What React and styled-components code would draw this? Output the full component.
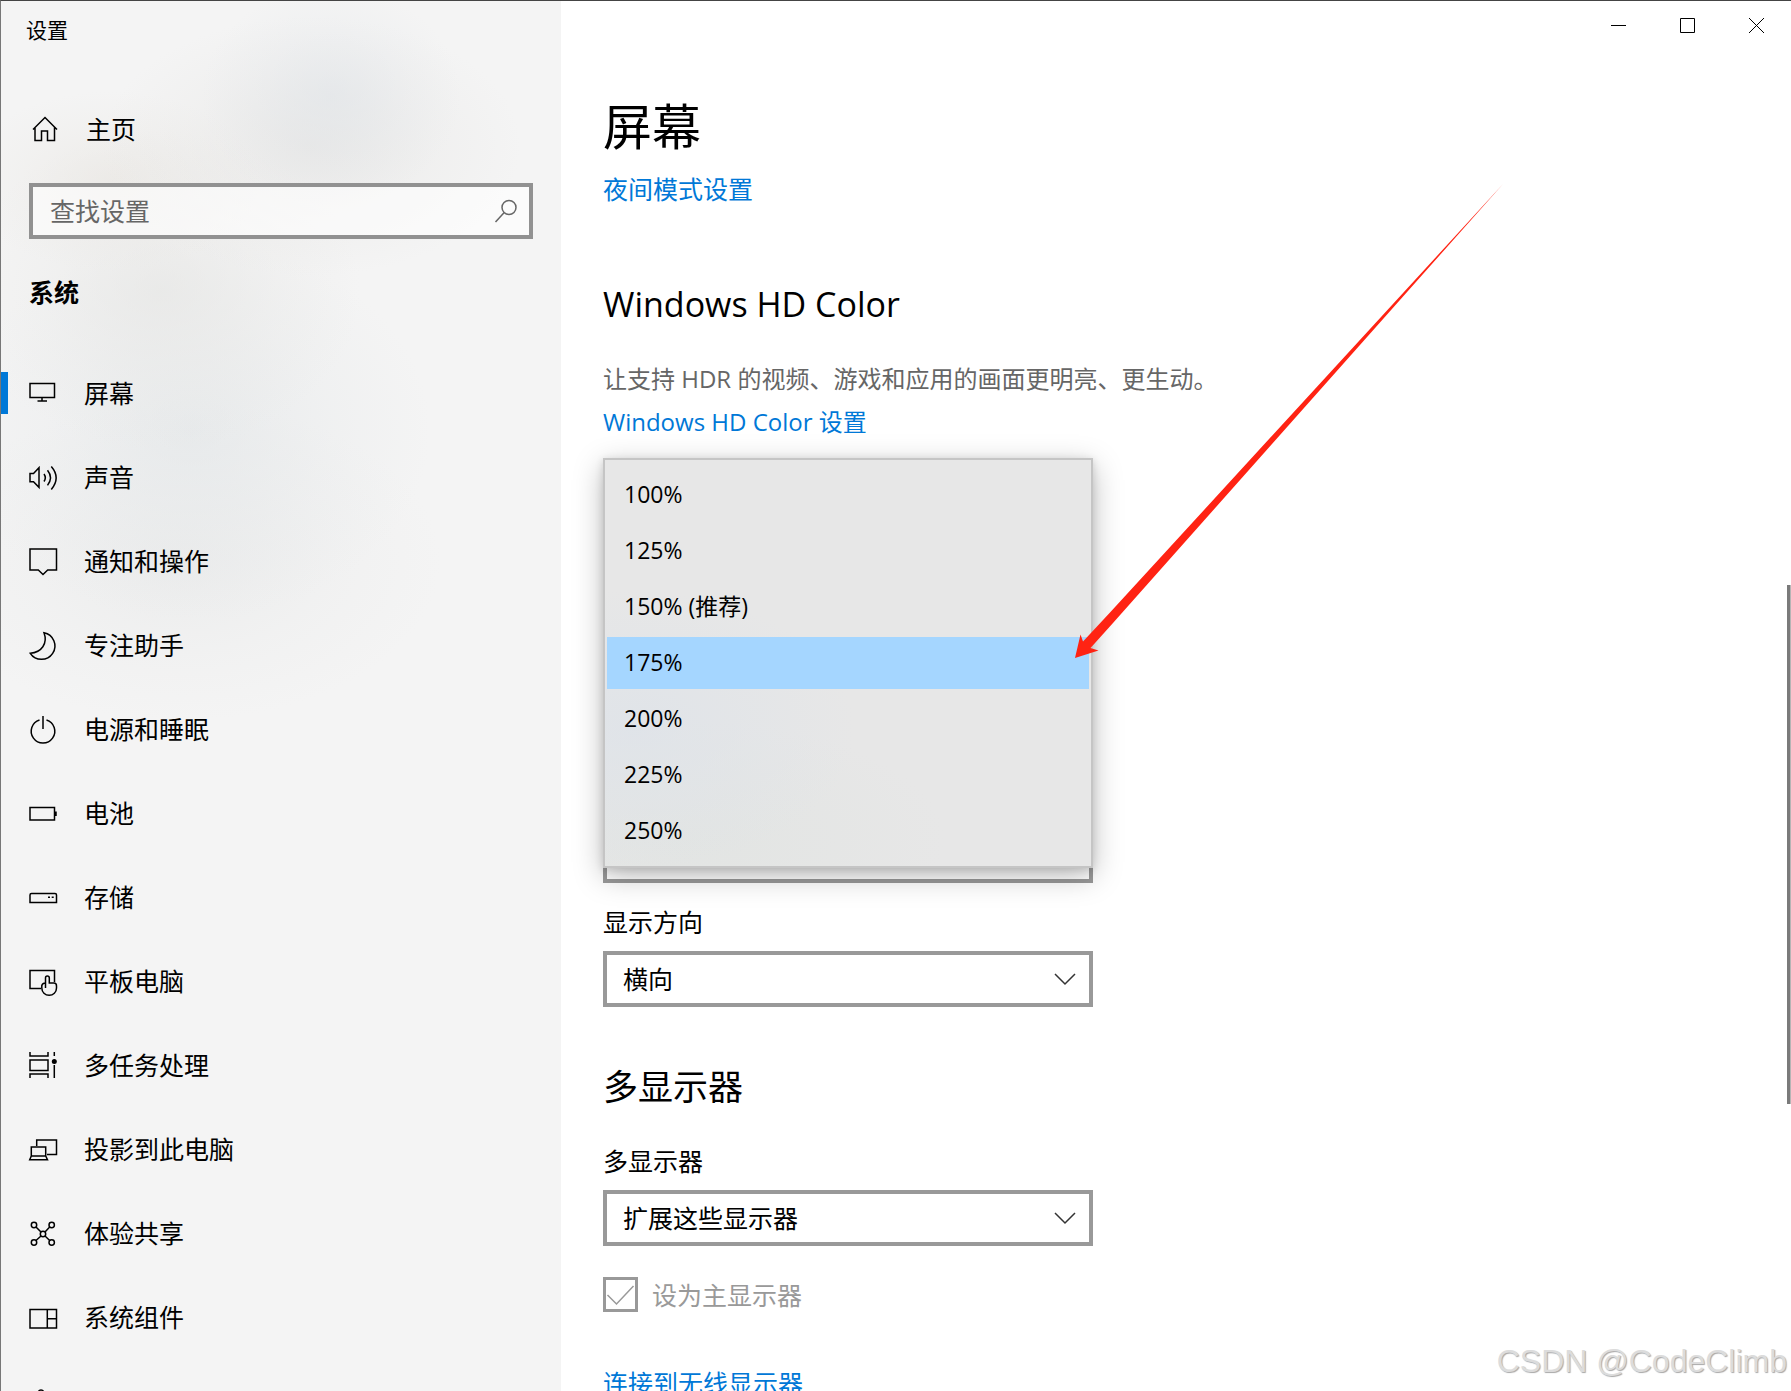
import React, { useState } from 'react';
import styled, { createGlobalStyle } from 'styled-components';

const GlobalStyle = createGlobalStyle`
  * {
    box-sizing: border-box;
  }

  body {
    margin: 0;
    overflow: hidden;
    background-color: #ffffff;
  }

  body, input, select, button {
    font-family: "Open Sans", "Noto Sans CJK SC", sans-serif;
    font-size: 25px;
    line-height: 32px;
    color: #000000;
  }
`;

const Window = styled.div`
  position: relative;
  display: flex;
  height: 100vh;
  overflow: hidden;
  border-top: 1px solid #444444;
  border-left: 1px solid #777777;
`;

const Sidebar = styled.aside`
  flex: 0 0 560px;
  display: flex;
  flex-direction: column;
  background-color: #f4f4f4;
  background-image:
    radial-gradient(ellipse 130px 110px at 330px 95px, rgba(224, 228, 232, 0.6), rgba(224, 228, 232, 0.2) 60%, transparent),
    radial-gradient(ellipse 210px 130px at 310px 145px, rgba(226, 225, 223, 0.6), rgba(226, 225, 223, 0.2) 60%, transparent),
    radial-gradient(ellipse 150px 90px at 110px 180px, rgba(232, 229, 224, 0.6), rgba(232, 229, 224, 0.2) 60%, transparent),
    radial-gradient(ellipse 200px 160px at 160px 290px, rgba(228, 228, 226, 0.6), rgba(228, 228, 226, 0.2) 60%, transparent),
    radial-gradient(ellipse 240px 190px at 190px 430px, rgba(224, 228, 230, 0.6), rgba(224, 228, 230, 0.2) 60%, transparent),
    radial-gradient(ellipse 260px 160px at 180px 560px, rgba(230, 231, 231, 0.6), rgba(230, 231, 231, 0.2) 60%, transparent);

  > * {
    flex: none;
  }
`;

const WindowTitle = styled.div`
  padding: 13px 25px 0;
  font-size: 21px;
`;

const HomeLink = styled.a`
  display: flex;
  align-items: center;
  gap: 27px;
  height: 56px;
  margin-top: 55px;
  padding: 0 30px;
  color: #000000;
  text-decoration: none;
`;

const SearchBox = styled.form`
  display: flex;
  align-items: center;
  height: 56px;
  margin: 26px 28px 0;
  padding: 0 12px 0 17px;
  border: 4px solid #919191;
  background-color: rgba(255, 255, 255, 0.6);
`;

const SearchInput = styled.input`
  flex: 1;
  min-width: 0;
  padding: 0;
  border: none;
  outline: none;
  background: transparent;

  &::placeholder {
    color: #666666;
    opacity: 1;
  }
`;

const IconButton = styled.button`
  display: flex;
  padding: 0;
  border: none;
  background: transparent;
`;

const GroupTitle = styled.h2`
  margin: 35px 28px 0;
  font-size: 25px;
  line-height: 36px;
  font-weight: 700;
`;

const NavList = styled.ul`
  margin: 41px 0 0;
  padding: 0;
  list-style: none;
`;

const NavItem = styled.a`
  display: flex;
  align-items: center;
  height: 84px;
  gap: 27px;
  color: #000000;
  text-decoration: none;

  &::before {
    content: '';
    width: 7px;
    height: 42px;
    margin-right: -6px;
    background-color: ${({ $active }) => ($active ? '#0078d7' : 'transparent')};
  }
`;

const Icon = styled.svg`
  flex: none;
  overflow: visible;
  fill: none;
  stroke: ${({ $color }) => $color || '#000000'};
  stroke-width: 1.5;
`;

const Main = styled.main`
  flex: 1;
  min-width: 0;
  display: flex;
  flex-direction: column;
`;

const CaptionBar = styled.div`
  display: flex;
  justify-content: flex-end;
  height: 49px;
  flex: none;
`;

const CaptionButton = styled.button`
  display: flex;
  align-items: center;
  justify-content: center;
  width: 69px;
  padding: 0;
  border: none;
  background: transparent;
`;

const Content = styled.div`
  display: flex;
  flex-direction: column;
  align-items: flex-start;
  padding: 46px 42px 0;
`;

const PageTitle = styled.h1`
  margin: 0;
  font-size: 49px;
  line-height: 60px;
  font-weight: 400;
`;

const SectionTitle = styled.h2`
  margin: ${({ $gap }) => $gap}px 0 0;
  font-size: ${({ $size }) => $size || 35}px;
  line-height: 44px;
  font-weight: 400;
`;

const TextLink = styled.a`
  margin-top: ${({ $gap }) => $gap}px;
  font-size: ${({ $size }) => $size || 25}px;
  color: #0078d7;
  text-decoration: none;
`;

const Description = styled.p`
  margin: 37px 0 0;
  font-size: 24px;
  color: #666666;
`;

const ScaleField = styled.div`
  position: relative;
  display: flex;
  align-items: flex-end;
  width: 490px;
  max-width: 100%;
  height: 425px;
  margin-top: 20px;
`;

const Field = styled.div`
  display: flex;
  flex-direction: column;
  gap: 13px;
  width: 490px;
  max-width: 100%;
  margin-top: ${({ $gap }) => $gap}px;
`;

const SelectBox = styled.div`
  display: grid;
  align-items: center;
  width: 100%;

  > * {
    grid-area: 1 / 1;
  }

  svg {
    justify-self: end;
    margin-right: 17px;
    pointer-events: none;
  }
`;

const Select = styled.select`
  appearance: none;
  width: 100%;
  height: 56px;
  padding: 0 16px;
  border: 4px solid #999999;
  border-radius: 0;
  background-color: #ffffff;
`;

const Popup = styled.ul`
  position: absolute;
  top: 0;
  left: 0;
  width: 100%;
  height: 410px;
  display: flex;
  flex-direction: column;
  gap: 4px;
  margin: 0;
  padding: 9px 2px;
  list-style: none;
  border: 2px solid #c5c5c5;
  background-color: #e7e7e7;
  background-image:
    radial-gradient(ellipse 220px 140px at 30px 270px, rgba(222, 227, 233, 0.8), transparent),
    radial-gradient(ellipse 260px 120px at 80px 380px, rgba(225, 228, 226, 0.8), transparent);
  box-shadow: 0 8px 28px rgba(0, 0, 0, 0.26), 0 2px 8px rgba(0, 0, 0, 0.14);
`;

const Option = styled.li`
  height: 52px;
  padding: 0 17px;
  font-size: 23px;
  line-height: 50px;
  background-color: ${({ $selected }) => ($selected ? '#a5d6ff' : 'transparent')};
  cursor: default;
`;

const CheckRow = styled.label`
  display: flex;
  align-items: center;
  gap: 14px;
  height: 35px;
  margin-top: 31px;
  color: #999999;
`;

const CheckBox = styled.span`
  display: grid;
  place-items: center;

  > * {
    grid-area: 1 / 1;
  }
`;

const CheckInput = styled.input`
  appearance: none;
  width: 35px;
  height: 35px;
  margin: 0;
  border: 3px solid #999999;
`;

const ScrollThumb = styled.div`
  position: absolute;
  right: 0;
  top: 42%;
  width: 4px;
  height: 519px;
  background-color: #7a7a7a;
  border-right: 1px solid #b5b5b5;
`;

const Arrow = styled.svg`
  position: absolute;
  left: 1074px;
  top: 183px;
  pointer-events: none;
`;

const Watermark = styled.div`
  position: absolute;
  right: 4px;
  bottom: 12px;
  font-family: "Liberation Sans", sans-serif;
  font-size: 32px;
  line-height: 36px;
  color: #dcdcdc;
  text-shadow: 1px 1px 1px #a8a8a8;
`;

const navItems = [
  {
    label: '屏幕',
    icon: <path d="M1 4.5H25.5V18.5H1ZM13 18.5V22M8.5 22H18" />,
  },
  {
    label: '声音',
    icon: (
      <path d="M1 10.5H4.5L10 4.7V24.3L4.5 18.7H1ZM15 11Q17.6 14.7 15 18.5M18.5 7.3Q24.5 14.7 18.5 22.4M22.3 3.5Q32 14.7 22.3 26.5" />
    ),
  },
  {
    label: '通知和操作',
    icon: <path d="M1 2H27.5V23H18.7L14 27.5L9.3 23H1Z" />,
  },
  {
    label: '专注助手',
    icon: <path d="M15 1.8A13.4 13.4 0 1 1 1.3 22.3C12.5 21.5 19 12.5 15 1.8Z" />,
  },
  {
    label: '电源和睡眠',
    icon: <path d="M14 1V14M10.5 5A11.8 11.8 0 1 0 17.5 5" />,
  },
  {
    label: '电池',
    icon: (
      <>
        <path d="M1 8.5H25.5V21H1Z" />
        <path d="M26.5 12.5V17" strokeWidth="2.5" />
      </>
    ),
  },
  {
    label: '存储',
    icon: (
      <>
        <path d="M1 19.5V12Q1 10.5 2.5 10.5H26Q27.5 10.5 27.5 12V19.5Z" />
        <path d="M19 14.3H21M22.7 14.3H24.7" />
      </>
    ),
  },
  {
    label: '平板电脑',
    icon: (
      <path d="M12 21.5H1V3.5H25.5V15M16.5 21V11Q16.5 9 18.3 9Q20.3 9 20.3 11V16H25Q27.5 16 27.5 19V21A7.3 7.3 0 0 1 12.8 21V18.5Q13.5 16 16.5 16" />
    ),
  },
  {
    label: '多任务处理',
    icon: (
      <>
        <path d="M1 1V5H19V1M1 9H19V19.5H1ZM1 27V23H19V27M25.3 1V5M25.3 14V27" />
        <circle cx="25.3" cy="10.5" r="2.5" fill="#000000" stroke="none" />
      </>
    ),
  },
  {
    label: '投影到此电脑',
    icon: (
      <path d="M7.7 11V5H27.5V19.5H18M2.3 21V12H16.7V21M2.3 21H16.7L18.5 24.7H0.7Z" />
    ),
  },
  {
    label: '体验共享',
    icon: (
      <>
        <circle cx="5" cy="6" r="2.7" />
        <circle cx="22.7" cy="6" r="2.7" />
        <circle cx="5" cy="23.5" r="2.7" />
        <circle cx="22.7" cy="23.5" r="2.7" />
        <circle cx="14" cy="15" r="2.7" />
        <path d="M7 8L12 13M20.7 8L16 13M7 21.5L12 17M20.7 21.5L16 17" />
      </>
    ),
  },
  {
    label: '系统组件',
    icon: <path d="M1 6.5H27.5V25H1ZM18.3 6.5V25M18.3 15.7H27.5" />,
  },
];

const scaleOptions = ['100%', '125%', '150% (推荐)', '175%', '200%', '225%', '250%'];

const Chevron = () => (
  <Icon $color="#333333" width="22" height="12" viewBox="0 0 22 12" aria-hidden="true">
    <path d="M1 1L11 11L21 1" />
  </Icon>
);

const SelectField = ({ id, label, value, gap }) => (
  <Field $gap={gap}>
    <label htmlFor={id}>{label}</label>
    <SelectBox>
      <Select id={id} defaultValue={value}>
        <option value={value}>{value}</option>
      </Select>
      <Chevron />
    </SelectBox>
  </Field>
);

const App = () => {
  const [scale, setScale] = useState('175%');
  const [active, setActive] = useState('屏幕');

  return (
    <>
      <GlobalStyle />
      <Window>
        <Sidebar>
          <WindowTitle>设置</WindowTitle>
          <HomeLink href="#home">
            <Icon width="28" height="28" viewBox="0 0 28 28">
              <path d="M2 14.5L14 2.5L26 14.5M4 12.5V25.5H10.5V16H16.5V25.5H23.5V12.5" />
            </Icon>
            <span>主页</span>
          </HomeLink>
          <SearchBox onSubmit={(e) => e.preventDefault()}>
            <SearchInput type="search" placeholder="查找设置" aria-label="查找设置" />
            <IconButton type="submit" aria-label="搜索">
              <Icon $color="#666666" width="22" height="24" viewBox="0 0 22 24">
                <circle cx="14" cy="8.5" r="7" />
                <path d="M9 13.7L0.5 23" />
              </Icon>
            </IconButton>
          </SearchBox>
          <GroupTitle>系统</GroupTitle>
          <nav>
            <NavList>
              {navItems.map((item) => (
                <li key={item.label}>
                  <NavItem
                    href={`#${item.label}`}
                    $active={item.label === active}
                    onClick={() => setActive(item.label)}
                  >
                    <Icon width="28" height="28" viewBox="0 0 28 28">{item.icon}</Icon>
                    <span>{item.label}</span>
                  </NavItem>
                </li>
              ))}
              <li>
                <NavItem href="#clipboard" aria-label="剪贴板">
                  <Icon width="28" height="28" viewBox="0 0 28 28">
                    <path d="M9.3 5A2.8 2.8 0 0 1 14.7 5H21V27H3V5Z" />
                  </Icon>
                </NavItem>
              </li>
            </NavList>
          </nav>
        </Sidebar>

        <Main>
          <CaptionBar>
            <CaptionButton aria-label="最小化">
              <Icon width="15" height="15" viewBox="0 0 15 15">
                <path d="M0 7.5H15" strokeWidth="1" />
              </Icon>
            </CaptionButton>
            <CaptionButton aria-label="最大化">
              <Icon width="15" height="15" viewBox="0 0 15 15">
                <path d="M0.5 0.5H14.5V14.5H0.5Z" strokeWidth="1" />
              </Icon>
            </CaptionButton>
            <CaptionButton aria-label="关闭">
              <Icon width="15" height="15" viewBox="0 0 15 15">
                <path d="M0 0L15 15M15 0L0 15" strokeWidth="1" />
              </Icon>
            </CaptionButton>
          </CaptionBar>

          <Content>
            <PageTitle>屏幕</PageTitle>
            <TextLink href="#night" $gap={17}>夜间模式设置</TextLink>

            <SectionTitle $gap={77} $size={34}>Windows HD Color</SectionTitle>
            <Description>让支持 HDR 的视频、游戏和应用的画面更明亮、更生动。</Description>
            <TextLink href="#hdcolor" $gap={11} $size={24}>Windows HD Color 设置</TextLink>

            <ScaleField>
              <SelectBox>
                <Select aria-label="显示分辨率" />
              </SelectBox>
              <Popup role="listbox" aria-label="缩放">
                {scaleOptions.map((option) => (
                  <Option
                    key={option}
                    role="option"
                    aria-selected={option === scale}
                    $selected={option === scale}
                    onClick={() => setScale(option)}
                  >
                    {option}
                  </Option>
                ))}
              </Popup>
            </ScaleField>

            <SelectField id="orientation" label="显示方向" value="横向" gap={23} />

            <SectionTitle $gap={58}>多显示器</SectionTitle>
            <SelectField id="displays" label="多显示器" value="扩展这些显示器" gap={36} />

            <CheckRow>
              <CheckBox>
                <CheckInput type="checkbox" defaultChecked disabled />
                <Icon $color="#999999" width="27" height="20" viewBox="0 0 27 20">
                  <path d="M0.5 10L9.5 19L26.5 1" />
                </Icon>
              </CheckBox>
              设为主显示器
            </CheckRow>
            <TextLink href="#wireless" $gap={55}>连接到无线显示器</TextLink>
          </Content>
        </Main>

        <ScrollThumb />
        <Arrow width="428" height="475" viewBox="0 0 428 475" aria-hidden="true">
          <path d="M0 474L5.5 450.5L8 457.5L35 428.5L428 0L38 439L15.5 464L23.5 466.5Z" fill="#ff2313" />
        </Arrow>
        <Watermark>CSDN @CodeClimb</Watermark>
      </Window>
    </>
  );
};

export default App;
